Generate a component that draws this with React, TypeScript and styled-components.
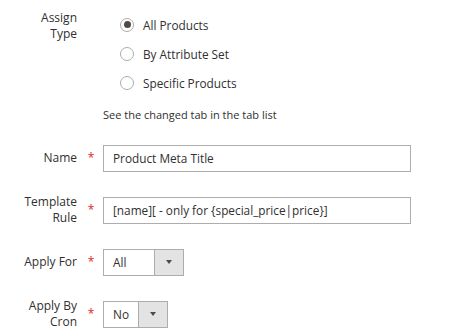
import React, { useState } from 'react';
import styled, { createGlobalStyle } from 'styled-components';

const GlobalStyle = createGlobalStyle`
  body {
    margin: 0;
    background: #ffffff;
    font-family: 'Open Sans', 'Noto Sans', sans-serif;
    color: #303030;
  }
`;

const Form = styled.div`
  width: 472px;
  height: 335px;
  padding-top: 10px;
  box-sizing: border-box;
  display: flex;
  flex-direction: column;
`;

const Field = styled.div<{ $top?: boolean }>`
  display: grid;
  grid-template-columns: 77px 26px 1fr;
  align-items: ${(p) => (p.$top ? 'start' : 'center')};
  min-height: ${(p) => (p.$top ? 'auto' : '32px')};
  margin-bottom: ${(p) => (p.$top ? '0' : '20px')};
`;

const Label = styled.div`
  font-size: 12px;
  font-weight: 500;
  line-height: 16px;
  text-align: right;
  color: #303030;
`;

const Required = styled.span`
  color: #e22626;
  font-size: 12px;
  text-align: center;
  padding-left: 2px;
  line-height: 16px;
`;

const RadioList = styled.div`
  display: flex;
  flex-direction: column;
`;

const RadioRow = styled.label`
  display: flex;
  align-items: center;
  height: 29px;
  margin-left: 17px;
  font-size: 11.8px;
  cursor: pointer;
`;

const RadioCircle = styled.span<{ $checked: boolean }>`
  width: 14px;
  height: 14px;
  border: 1px solid #adadad;
  border-radius: 50%;
  box-sizing: border-box;
  display: flex;
  align-items: center;
  justify-content: center;
  margin-right: 9px;
  &::after {
    content: '';
    width: 7px;
    height: 7px;
    border-radius: 50%;
    background: ${(p) => (p.$checked ? '#514943' : 'transparent')};
  }
`;

const Note = styled.div`
  grid-column: 3;
  font-size: 11px;
  line-height: 15px;
  margin: 10px 0 20px 0;
`;

const TextInput = styled.div`
  width: 308px;
  height: 27px;
  border: 1px solid #adadad;
  box-sizing: border-box;
  display: flex;
  align-items: center;
  padding-left: 9px;
  font-size: 11.8px;
  color: #303030;
`;

const Select = styled.div<{ $width: number }>`
  width: ${(p) => p.$width}px;
  height: 27px;
  border: 1px solid #adadad;
  box-sizing: border-box;
  display: flex;
  font-size: 11.8px;
`;

const SelectValue = styled.div`
  flex: 1;
  display: flex;
  align-items: center;
  padding-left: 9px;
`;

const SelectButton = styled.div`
  width: 28px;
  background: #e3e3e3;
  border-left: 1px solid #adadad;
  display: flex;
  align-items: center;
  justify-content: center;
  &::after {
    content: '';
    border-left: 3.5px solid transparent;
    border-right: 3.5px solid transparent;
    border-top: 4px solid #514943;
  }
`;

const options = ['All Products', 'By Attribute Set', 'Specific Products'];

export default function App() {
  const [assign, setAssign] = useState(0);
  return (
    <Form>
      <GlobalStyle />
      <Field $top>
        <Label>
          Assign
          <br />
          Type
        </Label>
        <span />
        <RadioList>
          {options.map((o, i) => (
            <RadioRow key={o} onClick={() => setAssign(i)}>
              <RadioCircle $checked={assign === i} />
              {o}
            </RadioRow>
          ))}
        </RadioList>
        <Note>See the changed tab in the tab list</Note>
      </Field>
      <Field>
        <Label>Name</Label>
        <Required>*</Required>
        <TextInput>Product Meta Title</TextInput>
      </Field>
      <Field>
        <Label>
          Template
          <br />
          Rule
        </Label>
        <Required>*</Required>
        <TextInput>[name][ - only for {'{'}special_price|price{'}'}]</TextInput>
      </Field>
      <Field>
        <Label>Apply For</Label>
        <Required>*</Required>
        <Select $width={81}>
          <SelectValue>All</SelectValue>
          <SelectButton />
        </Select>
      </Field>
      <Field>
        <Label>
          Apply By
          <br />
          Cron
        </Label>
        <Required>*</Required>
        <Select $width={65}>
          <SelectValue>No</SelectValue>
          <SelectButton />
        </Select>
      </Field>
    </Form>
  );
}
